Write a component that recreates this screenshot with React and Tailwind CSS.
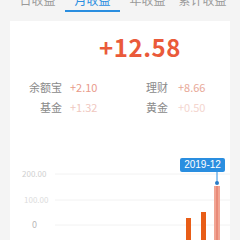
import React from 'react';

const tabs = ['日收益', '月收益', '年收益', '累计收益'];

export default function App() {
  return (
    <div className="w-[240px] h-[240px] overflow-hidden bg-[#f4f4f4]" style={{ fontFamily: '"Noto Sans CJK SC", "Noto Sans", sans-serif' }}>
      {/* Tabs */}
      <div className="flex px-[10px] -mt-[8px] h-[20px]">
        {tabs.map((t, i) => (
          <div key={t} className="flex-1 flex flex-col items-center justify-between">
            <span className={`text-[12px] leading-[16px] ${i === 1 ? 'text-[#2a8ee0]' : 'text-[#9a9a9a]'}`}>{t}</span>
            <div className={`h-[2px] w-full ${i === 1 ? 'bg-[#2a8ee0]' : 'bg-transparent'}`} />
          </div>
        ))}
      </div>

      {/* Card */}
      <div className="mx-[10px] mt-[9px] h-[230px] bg-white flex flex-col">
        {/* Amount */}
        <div className="flex items-end justify-center gap-1 pt-[12px] pl-[40px] h-[38px]">
          <span className="text-[24px] leading-[24px] font-bold text-[#ea5a3a] tracking-wide">+12.58</span>
        </div>

        {/* Breakdown */}
        <div className="grid grid-cols-2 mt-[22px] gap-y-[8px] text-[11px] leading-[12px]">
          <div className="flex items-center">
            <span className="w-[52px] text-right text-[#8a8a8a]">余额宝</span>
            <span className="ml-[8px] text-[#e99a8a]">+2.10</span>
          </div>
          <div className="flex items-center pl-[26px]">
            <span className="text-[#8a8a8a]">理财</span>
            <span className="ml-[10px] text-[#e8a897]">+8.66</span>
          </div>
          <div className="flex items-center">
            <span className="w-[52px] text-right text-[#8a8a8a]">基金</span>
            <span className="ml-[8px] text-[#f0c8c0]">+1.32</span>
          </div>
          <div className="flex items-center pl-[26px]">
            <span className="text-[#8a8a8a]">黄金</span>
            <span className="ml-[10px] text-[#f4d6cf]">+0.50</span>
          </div>
        </div>

        {/* Chart */}
        <div className="relative mt-[39px] flex-1">
          <svg className="absolute left-0 top-0" width="220" height="100" viewBox="0 0 220 100">
            <line x1="45" y1="22" x2="220" y2="22" stroke="#f2f2f2" strokeWidth="1" />
            <line x1="45" y1="48" x2="220" y2="48" stroke="#f2f2f2" strokeWidth="1" />
            <line x1="45" y1="73" x2="220" y2="73" stroke="#f2f2f2" strokeWidth="1" />
            <rect x="176" y="66" width="5" height="40" fill="#e85d17" />
            <rect x="191" y="60" width="5" height="46" fill="#e85d17" />
            <rect x="204" y="34" width="6" height="70" fill="#f1a594" />
            <rect x="206" y="34" width="2" height="70" fill="#e98a78" />
            <line x1="207" y1="20" x2="207" y2="31" stroke="#2a8ee0" strokeWidth="1" />
            <circle cx="207" cy="31" r="2" fill="#2a7cc8" />
          </svg>
          <div className="absolute left-[12px] top-[17px] text-[8px] leading-[10px] text-[#cfcfcf]">200.00</div>
          <div className="absolute left-[14px] top-[43px] text-[8px] leading-[10px] text-[#dcdcdc]">100.00</div>
          <div className="absolute left-[22px] top-[68px] text-[9px] leading-[10px] text-[#b8b8b8]">0</div>
          <div className="absolute left-[170px] top-[6px] w-[45px] h-[14px] bg-[#2a8ee0] rounded-[2px] flex items-center justify-center text-[10px] leading-[10px] text-white" style={{ fontFamily: '"Liberation Sans", sans-serif' }}>2019-12</div>
        </div>
      </div>
    </div>
  );
}
